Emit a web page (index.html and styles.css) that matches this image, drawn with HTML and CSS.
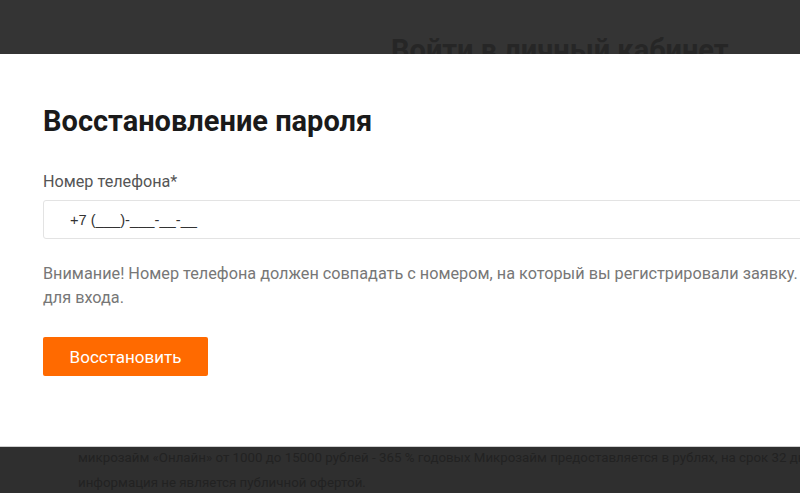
FILE: index.html
```html
<!DOCTYPE html>
<html lang="ru">
<head>
<meta charset="utf-8">
<title>Восстановление пароля</title>
<link rel="stylesheet" href="styles.css">
</head>
<body>
<div class="page">
  <header class="page-head">
    <h2 class="page-title">Войти в личный кабинет</h2>
  </header>
  <div class="page-spacer"></div>
  <footer class="page-foot">
    <p class="foot-text">Сервис предоставляет микрозаймы гражданам РФ. Условия предоставления:<br>микрозайм «Онлайн» от 1000 до 15000 рублей - 365 % годовых Микрозайм предоставляется в рублях, на срок 32 дня. Данная<br>информация не является публичной офертой.</p>
  </footer>
</div>

<div class="modal">
  <h1 class="modal-title">Восстановление пароля</h1>
  <label class="field-label" for="phone">Номер телефона*</label>
  <div class="field-box">
    <input id="phone" class="field-input" type="text" value="+7 (___)-___-__-__">
  </div>
  <p class="notice">Внимание! Номер телефона должен совпадать с номером, на который вы регистрировали заявку. Он&nbsp;является&nbsp;логином<br>для входа.</p>
  <button class="btn" type="button">Восстановить</button>
</div>
</body>
</html>
```

FILE: styles.css
```css
html, body {
  margin: 0;
  padding: 0;
}

body {
  width: 800px;
  height: 493px;
  overflow: hidden;
  position: relative;
  background: #343434;
  font-family: Roboto, "Noto Sans", "Liberation Sans", sans-serif;
}

.page {
  display: flex;
  flex-direction: column;
  height: 493px;
}

.page-head {
  padding: 33px 0 0 391px;
}

.page-title {
  margin: 0;
  font-size: 29px;
  line-height: 34px;
  font-weight: 700;
  color: #262626;
  white-space: nowrap;
}

.page-spacer {
  flex: 1;
}

.page-foot {
  background: #2f2f2f;
  padding: 0 0 0 78px;
  margin-bottom: -2px;
}

.foot-text {
  margin: 0;
  font-size: 13.3px;
  line-height: 25px;
  color: #222;
  white-space: nowrap;
}

.modal {
  position: absolute;
  top: 54px;
  left: 0;
  width: 1100px;
  height: 393px;
  box-sizing: border-box;
  padding: 51px 0 0 43px;
  background: #fff;
  border-bottom: 1px solid #cfcfcf;
}

.modal-title {
  margin: 0;
  font-size: 29px;
  line-height: 32px;
  font-weight: 700;
  color: #1a1a1a;
  white-space: nowrap;
}

.field-label {
  display: block;
  margin-top: 35px;
  font-size: 16.2px;
  line-height: 20px;
  color: #555;
}

.field-box {
  margin-top: 8px;
  width: 1000px;
}

.field-input {
  display: block;
  width: 100%;
  height: 39px;
  box-sizing: border-box;
  border: 1px solid #e3e3e3;
  border-radius: 3px;
  padding: 0 0 0 26px;
  font-family: "Liberation Sans", Arial, sans-serif;
  font-size: 14.7px;
  color: #333;
  background: #fff;
  outline: none;
}

.notice {
  margin: 23px 0 0;
  width: 1000px;
  font-size: 16.25px;
  line-height: 24px;
  color: #777;
}

.btn {
  display: block;
  margin-top: 27px;
  width: 165px;
  height: 39px;
  border: 0;
  border-radius: 2px;
  background: #ff6a00;
  color: #fff;
  font-family: inherit;
  font-size: 17px;
  cursor: pointer;
}
```
